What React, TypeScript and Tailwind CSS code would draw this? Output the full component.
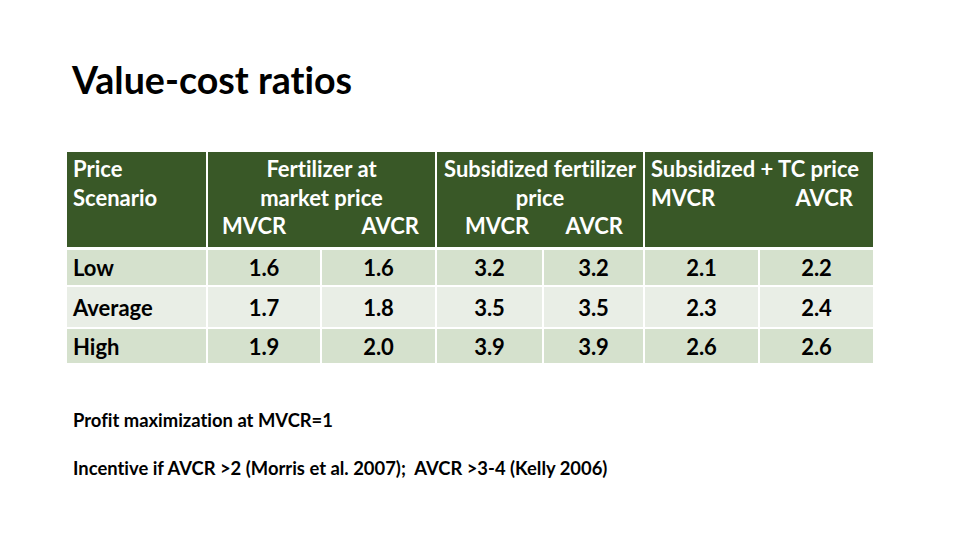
import React from "react";

const rows = [
  { label: "Low", vals: ["1.6", "1.6", "3.2", "3.2", "2.1", "2.2"], bg: "bg-[#d5e1cd]", h: "h-[35px]" },
  { label: "Average", vals: ["1.7", "1.8", "3.5", "3.5", "2.3", "2.4"], bg: "bg-[#e9eee6]", h: "h-[40px]" },
  { label: "High", vals: ["1.9", "2.0", "3.9", "3.9", "2.6", "2.6"], bg: "bg-[#d5e1cd]", h: "h-[34px]" },
];

export default function App() {
  return (
    <div
      className="w-[960px] h-[540px] bg-white text-black overflow-hidden flex flex-col [font-variant-ligatures:none]"
      style={{ fontFamily: "Lato, 'Open Sans', sans-serif" }}
    >
      <h1 className="pl-[72px] pt-[56px] text-[37.6px] leading-[48px] font-bold">
        Value-cost ratios
      </h1>

      <div className="ml-[67px] mt-[48px] w-[806px] grid grid-cols-[139px_112px_113px_105px_99px_113px_113px] gap-x-[2px] gap-y-[2px] text-[22px] font-bold">
        {/* header */}
        <div className="h-[95px] mb-[1px] bg-[#395827] text-white px-[6px] pt-[3px] leading-[28.5px]">
          <div>Price</div>
          <div>Scenario</div>
        </div>
        <div className="col-span-2 h-[95px] bg-[#395827] text-white pt-[3px] leading-[28.5px]">
          <div className="text-center">Fertilizer at</div>
          <div className="text-center">market price</div>
          <div className="flex justify-between pl-[14px] pr-[16px]">
            <span>MVCR</span>
            <span>AVCR</span>
          </div>
        </div>
        <div className="col-span-2 h-[95px] bg-[#395827] text-white pt-[3px] leading-[28.5px]">
          <div className="text-center whitespace-nowrap">Subsidized fertilizer</div>
          <div className="text-center">price</div>
          <div className="flex justify-between pl-[28px] pr-[20px]">
            <span>MVCR</span>
            <span>AVCR</span>
          </div>
        </div>
        <div className="col-span-2 h-[95px] bg-[#395827] text-white pt-[3px] leading-[28.5px] pl-[6px] pr-[20px]">
          <div className="whitespace-nowrap">Subsidized + TC price</div>
          <div className="flex justify-between">
            <span>MVCR</span>
            <span>AVCR</span>
          </div>
        </div>

        {rows.map((r) => (
          <React.Fragment key={r.label}>
            <div className={`${r.h} ${r.bg} flex items-center px-[6px]`}>{r.label}</div>
            {r.vals.map((v, i) => (
              <div key={i} className={`${r.h} ${r.bg} flex items-center justify-center`}>
                {v}
              </div>
            ))}
          </React.Fragment>
        ))}
      </div>

      <div className="pl-[73px] mt-[46px] text-[18.4px] font-bold leading-[22px]">
        Profit maximization at MVCR=1
      </div>
      <div className="pl-[73px] mt-[26px] text-[18.4px] font-bold leading-[22px]">
        Incentive if AVCR &gt;2 (Morris et al. 2007);&nbsp; AVCR &gt;3-4 (Kelly 2006)
      </div>
    </div>
  );
}
